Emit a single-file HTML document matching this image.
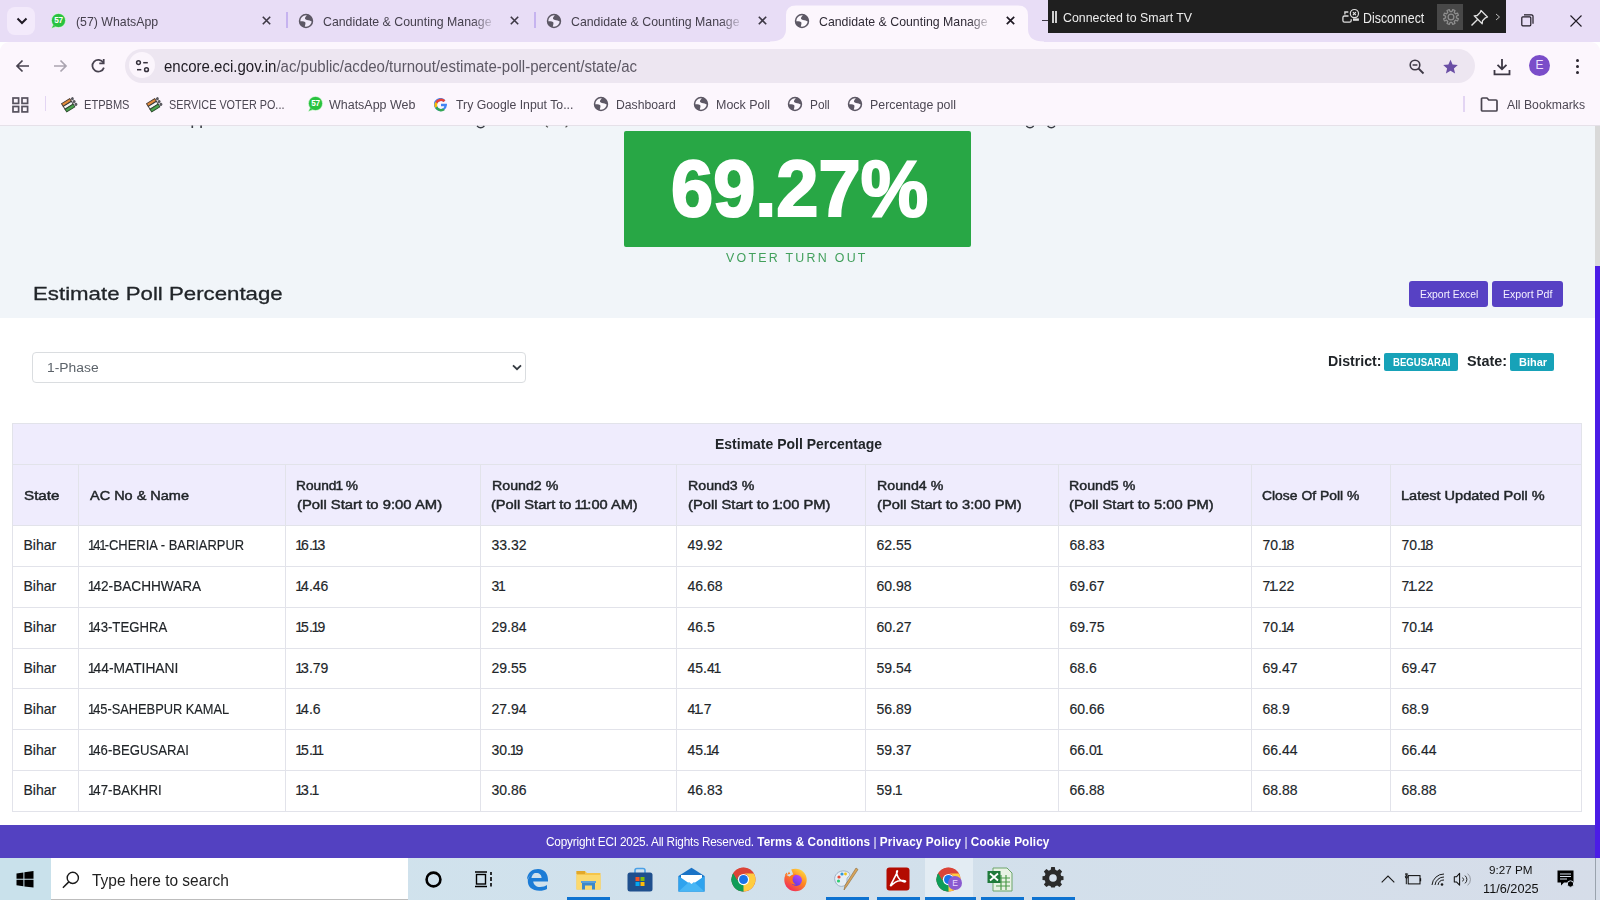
<!DOCTYPE html>
<html><head><meta charset="utf-8">
<style>
*{box-sizing:border-box;margin:0;padding:0}
html,body{width:1600px;height:900px;overflow:hidden;font-family:"Liberation Sans",sans-serif;background:#fff}
.abs{position:absolute}
.ft{position:absolute;white-space:nowrap;line-height:1}
.n1{margin:0 -2px 0 -1.2px}
.n1h{margin:0 -1.2px 0 -0.8px}
.hd{-webkit-text-stroke:0.45px #212529}
.dt{-webkit-text-stroke:0.15px #212529}
#tabs{position:absolute;left:0;top:0;width:1600px;height:42px;background:#e8ddf6}
#toolbar{position:absolute;left:0;top:41.5px;width:1600px;height:46.5px;background:#fcf6fd;border-radius:9px 9px 0 0}
#bm{position:absolute;left:0;top:88px;width:1600px;height:38px;background:#fcf6fd;border-bottom:1px solid #e6e1e9}
#sec1{position:absolute;left:0;top:126px;width:1595px;height:192px;background:#f1f5f9}
#green{position:absolute;left:624px;top:131px;width:347px;height:116px;background:#28a745;border-radius:2px}
.btn{position:absolute;top:281px;height:26px;background:#5741c4;border-radius:3px}
#sel{position:absolute;left:32px;top:352px;width:494px;height:31px;border:1px solid #dadde0;border-radius:4px;background:#fff}
.badge{position:absolute;top:353px;height:18px;background:#17a2b8;border-radius:2px}
#thead{position:absolute;left:12px;top:423px;width:1570px;height:102px;background:#efecfd}
.hl{position:absolute;height:1px;background:#e2e3ea}
.vl{position:absolute;width:1px;background:#e2e3ea}
#footer{position:absolute;left:0;top:825px;width:1595px;height:33px;background:#5341c1}
#sb{position:absolute;left:1595px;top:126px;width:5px;height:140px;background:#d9d9d9}
#thumb{position:absolute;left:1595px;top:266px;width:5px;height:592px;background:#4b1ce6}
#task{position:absolute;left:0;top:858px;width:1600px;height:42px;background:linear-gradient(90deg,#cfe3ed,#d1e1ec 45%,#d6dde9)}
</style></head><body>
<svg width="0" height="0" style="position:absolute">
  <defs>
    <g id="globe">
      <circle cx="11" cy="11" r="6.45" fill="#fff" fill-opacity="0.35" stroke="#5d5865" stroke-width="1.55"/>
      <path d="M12.2 4.5 C11.4 6.2 9.6 7.6 10 8.7 C10.6 10 13.2 9.8 14.6 10.6 C15.8 11.2 16.6 11.4 17.45 11.5 A6.45 6.45 0 0 0 12.2 4.5 Z" fill="#5d5865"/>
      <path d="M4.6 11.4 C6.6 11.3 8.8 11 10 11.9 C11 12.8 10.2 14.6 9.6 17.3 A6.45 6.45 0 0 1 4.6 11.4 Z" fill="#5d5865"/>
    </g>
    <g id="evm">
      <g transform="rotate(-32 8.5 8.5)">
        <rect x="2.2" y="3.6" width="9.6" height="3.1" fill="#e08a3a" stroke="#4a3a30" stroke-width="0.9"/>
        <rect x="2.2" y="6.9" width="9.6" height="3.1" fill="#f6f6f6" stroke="#3a3a3a" stroke-width="0.9"/>
        <rect x="2.2" y="10.2" width="9.6" height="3.1" fill="#4aa34e" stroke="#2d4a2d" stroke-width="0.9"/>
        <circle cx="14" cy="5.1" r="1.5" fill="#5a5a60"/><circle cx="14" cy="8.5" r="1.5" fill="#5a5a60"/><circle cx="14" cy="11.8" r="1.5" fill="#5a5a60"/>
      </g>
    </g>
    <g id="chromei">
      <circle cx="12" cy="12" r="11.5" fill="#db4437"/>
      <path d="M12 12 L2.04 6.25 A11.5 11.5 0 0 0 12 23.5 Z" fill="#0f9d58"/>
      <path d="M12 12 L2.04 6.25 L12 23.5 L17.75 13.5 Z" fill="#0f9d58"/>
      <path d="M12 12 L21.96 6.25 A11.5 11.5 0 0 1 12 23.5 Z" fill="#ffcd40"/>
      <path d="M12 12 L21.96 6.25 L12 23.5 L6.25 13.5 Z" fill="#ffcd40" opacity="0"/>
      <path d="M12 6.5 H21.96 A11.5 11.5 0 0 0 2.04 6.25 L6.2 13.5 A6 6 0 0 1 12 6.5Z" fill="#db4437"/>
      <path d="M2.04 6.25 L7 14.8 L12 23.5 A11.5 11.5 0 0 1 2.04 6.25Z" fill="#0f9d58"/>
      <path d="M12 23.5 L17.2 14.8 L21.96 6.25 H12 A6 6 0 0 1 17.2 14.8 Z" fill="#ffcd40"/>
      <circle cx="12" cy="12" r="5.4" fill="#fff"/>
      <circle cx="12" cy="12" r="4.3" fill="#1a73e8"/>
    </g>
  </defs>
</svg>

<!-- TAB STRIP -->
<div id="tabs">
  <div class="abs" style="left:7px;top:7px;width:28px;height:28px;border-radius:8px;background:#f3eafb"></div>
  <svg class="abs" style="left:16px;top:16px" width="12" height="10" viewBox="0 0 12 10"><path d="M1.5 2.5 L6 7 L10.5 2.5" fill="none" stroke="#1f1a24" stroke-width="2"/></svg>
  <!-- whatsapp icon -->
  <svg class="abs" style="left:49px;top:12px" width="18" height="18" viewBox="0 0 18 18"><path d="M4.2 12.6 L2.3 16.4 L6.8 14.9 Z" fill="#29c23f" stroke="#eafbe9" stroke-width="0.7"/><circle cx="9.5" cy="8.5" r="7.1" fill="#29c23f" stroke="#eafbe9" stroke-width="0.7"/><path d="M4.6 12.9 L3.3 15.5 L6.6 14.3 Z" fill="#29c23f"/><text x="9.6" y="11.4" font-size="8.2" font-weight="bold" fill="#fff" text-anchor="middle" font-family="Liberation Sans" letter-spacing="-0.3">57</text></svg>
  <svg class="abs x8" style="left:262px;top:16px" width="9" height="9" viewBox="0 0 9 9"><path d="M0.8 0.8 L8.2 8.2 M8.2 0.8 L0.8 8.2" stroke="#3d3845" stroke-width="1.6"/></svg>
  <div class="abs" style="left:286px;top:12px;width:1.5px;height:16px;background:#c6b3ef"></div>
  <svg class="abs" style="left:294.76px;top:9.50px" width="22" height="22" viewBox="0 0 22 22"><use href="#globe"/></svg>
  <svg class="abs" style="left:510px;top:16px" width="9" height="9" viewBox="0 0 9 9"><path d="M0.8 0.8 L8.2 8.2 M8.2 0.8 L0.8 8.2" stroke="#3d3845" stroke-width="1.6"/></svg>
  <div class="abs" style="left:534px;top:12px;width:1.5px;height:16px;background:#c6b3ef"></div>
  <svg class="abs" style="left:542.60px;top:9.50px" width="22" height="22" viewBox="0 0 22 22"><use href="#globe"/></svg>
  <svg class="abs" style="left:758px;top:16px" width="9" height="9" viewBox="0 0 9 9"><path d="M0.8 0.8 L8.2 8.2 M8.2 0.8 L0.8 8.2" stroke="#3d3845" stroke-width="1.6"/></svg>
  <!-- active tab -->
  <svg class="abs" style="left:770px;top:5px" width="274" height="40" viewBox="0 0 274 40"><path d="M0 36.5 Q16 36.5 16 24 L16 10 Q16 0.5 26 0.5 L248 0.5 Q258 0.5 258 10 L258 24 Q258 36.5 274 36.5 V40 H0 Z" fill="#fcf6fd"/></svg>
  <svg class="abs" style="left:790.70px;top:9.50px" width="22" height="22" viewBox="0 0 22 22"><use href="#globe"/></svg>
  <svg class="abs" style="left:1006px;top:16px" width="9" height="9" viewBox="0 0 9 9"><path d="M0.8 0.8 L8.2 8.2 M8.2 0.8 L0.8 8.2" stroke="#1f1a24" stroke-width="1.7"/></svg>
  <div class="abs" style="left:1042px;top:19.5px;width:7px;height:1.6px;background:#3d3845"></div>
  <!-- cast bar -->
  <div class="abs" style="left:1048px;top:0;width:458px;height:33px;background:#1f1f1f"></div>
  <div class="abs" style="left:1052px;top:11px;width:1.6px;height:12px;background:#cfcfcf"></div>
  <div class="abs" style="left:1055px;top:11px;width:1.6px;height:12px;background:#cfcfcf"></div>
  <svg class="abs" style="left:1336px;top:4px" width="26" height="22" viewBox="0 0 26 22"><path d="M12.5 12 H8.5 Q6.9 12 6.9 13.6 V16.6 Q6.9 18.2 8.5 18.2 H13.6 Q15.2 18.2 15.2 16.6 V15.2" fill="none" stroke="#dedede" stroke-width="1.3"/><path d="M8.9 10.4 V8 H12.3" fill="none" stroke="#dedede" stroke-width="1.3"/><circle cx="18.4" cy="9.6" r="4.1" fill="none" stroke="#dedede" stroke-width="1.2"/><path d="M16.9 8.1 L19.9 11.1 M19.9 8.1 L16.9 11.1" stroke="#e8e8e8" stroke-width="1.1"/><rect x="17" y="14.4" width="5.9" height="2.4" fill="#dedede"/></svg>
  <div class="abs" style="left:1437px;top:4px;width:26px;height:25.5px;background:#484848"></div>
  <svg class="abs" style="left:1439.7px;top:6.3px" width="22" height="22" viewBox="0 0 22 22"><path d="M16.42 11.91 L18.39 12.77 L17.48 14.97 L15.48 14.19 L14.19 15.48 L14.97 17.48 L12.77 18.39 L11.91 16.42 L10.09 16.42 L9.23 18.39 L7.03 17.48 L7.81 15.48 L6.52 14.19 L4.52 14.97 L3.61 12.77 L5.58 11.91 L5.58 10.09 L3.61 9.23 L4.52 7.03 L6.52 7.81 L7.81 6.52 L7.03 4.52 L9.23 3.61 L10.09 5.58 L11.91 5.58 L12.77 3.61 L14.97 4.52 L14.19 6.52 L15.48 7.81 L17.48 7.03 L18.39 9.23 L16.42 10.09 Z" fill="none" stroke="#8e8e8e" stroke-width="1.25" stroke-linejoin="round"/><circle cx="11" cy="11" r="2.9" fill="none" stroke="#8e8e8e" stroke-width="1.25"/></svg>
  <svg class="abs" style="left:1470px;top:9px" width="19" height="18" viewBox="0 0 19 18"><path d="M11 1.5 L17.5 8 L15.5 8.8 L12.5 11.8 L12.2 14.8 L4.2 6.8 L7.2 6.5 L10.2 3.5 Z" fill="none" stroke="#e0e0e0" stroke-width="1.3" stroke-linejoin="round"/><path d="M7.8 10.2 L1.5 16.5" stroke="#e0e0e0" stroke-width="1.4"/></svg>
  <svg class="abs" style="left:1495px;top:13px" width="6" height="8" viewBox="0 0 6 8"><path d="M1 1 L4.5 4 L1 7" fill="none" stroke="#bdbdbd" stroke-width="1"/></svg>
  <!-- window controls -->
  <svg class="abs" style="left:1521px;top:14px" width="13" height="13" viewBox="0 0 13 13"><rect x="0.8" y="2.8" width="9" height="9" rx="1" fill="none" stroke="#1f1a24" stroke-width="1.2"/><path d="M3 0.8 H10.5 A1.5 1.5 0 0 1 12 2.3 V9.8" fill="none" stroke="#1f1a24" stroke-width="1.2"/></svg>
  <svg class="abs" style="left:1570px;top:15px" width="12" height="12" viewBox="0 0 12 12"><path d="M0.5 0.5 L11.5 11.5 M11.5 0.5 L0.5 11.5" stroke="#1f1a24" stroke-width="1.1"/></svg>
</div>

<!-- TOOLBAR -->
<div id="toolbar">
  <svg class="abs" style="left:15px;top:17px" width="15" height="14" viewBox="0 0 15 14"><path d="M14 7 H2.5 M7.5 1.5 L2 7 L7.5 12.5" fill="none" stroke="#47424f" stroke-width="1.7"/></svg>
  <svg class="abs" style="left:53px;top:17px" width="15" height="14" viewBox="0 0 15 14"><path d="M1 7 H12.5 M7.5 1.5 L13 7 L7.5 12.5" fill="none" stroke="#aaa4b0" stroke-width="1.7"/></svg>
  <svg class="abs" style="left:88px;top:14px" width="20" height="20" viewBox="0 0 20 20"><path d="M15.3 6.6 A5.9 5.9 0 1 0 15.9 11.6" fill="none" stroke="#47424f" stroke-width="1.75"/><path d="M11.3 7.4 H15.7 V3" fill="none" stroke="#47424f" stroke-width="1.75"/></svg>
  <div class="abs" style="left:125px;top:7.5px;width:1350px;height:34px;border-radius:17px;background:#ede6f1"></div>
  <div class="abs" style="left:128.5px;top:10.5px;width:26px;height:26px;border-radius:13px;background:#fbf5fc"></div>
  <svg class="abs" style="left:134px;top:17px" width="16" height="14" viewBox="0 0 16 14"><circle cx="4.5" cy="3.7" r="1.9" fill="none" stroke="#35303b" stroke-width="1.5"/><path d="M9.2 3.7 H13.8" stroke="#35303b" stroke-width="1.5"/><circle cx="12.5" cy="10.7" r="1.9" fill="none" stroke="#35303b" stroke-width="1.5"/><path d="M3 10.7 H7.3" stroke="#35303b" stroke-width="1.5"/></svg>
  <svg class="abs" style="left:1409px;top:17px" width="16" height="16" viewBox="0 0 16 16"><circle cx="6" cy="6" r="4.8" fill="none" stroke="#3d3845" stroke-width="1.6"/><path d="M3.6 6 H8.4" stroke="#3d3845" stroke-width="1.5"/><path d="M9.5 9.5 L14.5 14.5" stroke="#3d3845" stroke-width="1.8"/></svg>
  <svg class="abs" style="left:1442px;top:17px" width="17" height="16" viewBox="0 0 17 16"><path d="M8.5 0.8 L10.6 5.6 L15.8 6 L11.9 9.4 L13.1 14.6 L8.5 11.8 L3.9 14.6 L5.1 9.4 L1.2 6 L6.4 5.6 Z" fill="#6a4ea5"/></svg>
  <svg class="abs" style="left:1493px;top:16px" width="18" height="18" viewBox="0 0 18 18"><path d="M9 1 V11 M4.5 6.8 L9 11.2 L13.5 6.8" fill="none" stroke="#3d3845" stroke-width="1.8"/><path d="M1.5 12 V16.3 H16.5 V12" fill="none" stroke="#3d3845" stroke-width="1.8"/></svg>
  <div class="abs" style="left:1529px;top:13.5px;width:21px;height:21px;border-radius:50%;background:#7a4dc9;color:#eee0ff;font-size:12px;text-align:center;line-height:21px">E</div>
  <div class="abs" style="left:1575.5px;top:17.5px;width:3px;height:3px;border-radius:50%;background:#2b2630"></div>
  <div class="abs" style="left:1575.5px;top:23.5px;width:3px;height:3px;border-radius:50%;background:#2b2630"></div>
  <div class="abs" style="left:1575.5px;top:29.5px;width:3px;height:3px;border-radius:50%;background:#2b2630"></div>
</div>

<!-- BOOKMARKS -->
<div id="bm">
  <svg class="abs" style="left:12px;top:9px" width="17" height="16" viewBox="0 0 17 16"><rect x="1" y="1" width="5.6" height="5.4" fill="none" stroke="#56515d" stroke-width="1.7"/><rect x="10" y="1" width="5.6" height="5.4" fill="none" stroke="#56515d" stroke-width="1.7"/><rect x="1" y="9.5" width="5.6" height="5.4" fill="none" stroke="#56515d" stroke-width="1.7"/><rect x="10" y="9.5" width="5.6" height="5.4" fill="none" stroke="#56515d" stroke-width="1.7"/></svg>
  <div class="abs" style="left:44.5px;top:8px;width:1.5px;height:15px;background:#e3d5f3"></div>
  <svg class="abs evm" style="left:61px;top:8px" width="17" height="17" viewBox="0 0 17 17"><use href="#evm"/></svg>
  <svg class="abs" style="left:146px;top:8px" width="17" height="17" viewBox="0 0 17 17"><use href="#evm"/></svg>
  <svg class="abs" style="left:305.5px;top:7px" width="18" height="18" viewBox="0 0 18 18"><path d="M4.2 12.6 L2.3 16.4 L6.8 14.9 Z" fill="#29c23f" stroke="#eafbe9" stroke-width="0.7"/><circle cx="9.5" cy="8.5" r="7.1" fill="#29c23f" stroke="#eafbe9" stroke-width="0.7"/><path d="M4.6 12.9 L3.3 15.5 L6.6 14.3 Z" fill="#29c23f"/><text x="9.6" y="11.4" font-size="8.2" font-weight="bold" fill="#fff" text-anchor="middle" font-family="Liberation Sans" letter-spacing="-0.3">57</text></svg>
  <svg class="abs" style="left:434px;top:10px" width="14" height="14" viewBox="0 0 14 14"><path d="M12.9 5.8 H7 V8.3 H10.3 C9.9 10 8.6 11 7 11 A4 4 0 1 1 9.6 4 L11.4 2.2 A6.6 6.6 0 1 0 13 7 Z" fill="#4285f4"/><path d="M1.2 4 L3.4 5.6 A4 4 0 0 1 9.6 4 L11.4 2.2 A6.6 6.6 0 0 0 1.2 4Z" fill="#ea4335"/><path d="M0.4 7 A6.6 6.6 0 0 0 1.2 10.1 L3.4 8.4 A4 4 0 0 1 3.4 5.6 L1.2 4 A6.6 6.6 0 0 0 0.4 7Z" fill="#fbbc05"/><path d="M1.2 10.1 A6.6 6.6 0 0 0 11 12.1 L8.9 10.5 A4 4 0 0 1 3.4 8.4Z" fill="#34a853"/></svg>
  <svg class="abs" style="left:589.50px;top:5.00px" width="22" height="22" viewBox="0 0 22 22"><use href="#globe"/></svg>
  <svg class="abs" style="left:689.50px;top:5.00px" width="22" height="22" viewBox="0 0 22 22"><use href="#globe"/></svg>
  <svg class="abs" style="left:783.50px;top:5.00px" width="22" height="22" viewBox="0 0 22 22"><use href="#globe"/></svg>
  <svg class="abs" style="left:844.00px;top:5.00px" width="22" height="22" viewBox="0 0 22 22"><use href="#globe"/></svg>
  <div class="abs" style="left:1463px;top:8px;width:1.5px;height:16px;background:#e3d5f3"></div>
  <svg class="abs" style="left:1480px;top:9px" width="19" height="15" viewBox="0 0 19 15"><path d="M1.5 2 A1 1 0 0 1 2.5 1 H7 L8.8 3 H16 A1 1 0 0 1 17 4 V13 A1 1 0 0 1 16 14 H2.5 A1 1 0 0 1 1.5 13 Z" fill="none" stroke="#4a4550" stroke-width="1.7" stroke-linejoin="round"/></svg>
</div>

<div id="sec1"></div>
<div id="green"></div>
<svg class="abs" style="left:0;top:120px" width="1100" height="12" viewBox="0 120 1100 12">
<path d="M192.3 125.5 V128 M201.1 125.5 V128" stroke="#3a3d45" stroke-width="1.6"/>
<path d="M477 126 Q480.7 129.6 484.4 126" fill="none" stroke="#3a3d45" stroke-width="1.3"/>
<path d="M1026.3 126 Q1030 129.6 1033.7 126 M1047.6 126 Q1051.3 129.6 1055 126" fill="none" stroke="#3a3d45" stroke-width="1.3"/>
<path d="M546 126 L548 127.3 M567.3 126 L565.5 127.3" stroke="#555" stroke-width="1.1"/>
</svg>
<div class="btn" style="left:1409px;width:79px"></div>
<div class="btn" style="left:1492px;width:70.5px"></div>
<div id="sel"></div>
<svg class="abs" style="left:512px;top:364px" width="10" height="7" viewBox="0 0 10 7"><path d="M1 1.3 L5 5.2 L9 1.3" fill="none" stroke="#343a40" stroke-width="1.8"/></svg>
<div class="badge" style="left:1384px;width:74px"></div>
<div class="badge" style="left:1510px;width:44px"></div>
<div id="thead"></div>
<div class="hl" style="left:12px;top:423px;width:1570px"></div>
<div class="hl" style="left:12px;top:464px;width:1570px"></div>
<div class="hl" style="left:12px;top:525px;width:1570px"></div>
<div class="hl" style="left:12px;top:566px;width:1570px"></div>
<div class="hl" style="left:12px;top:607px;width:1570px"></div>
<div class="hl" style="left:12px;top:648px;width:1570px"></div>
<div class="hl" style="left:12px;top:688px;width:1570px"></div>
<div class="hl" style="left:12px;top:729px;width:1570px"></div>
<div class="hl" style="left:12px;top:770px;width:1570px"></div>
<div class="hl" style="left:12px;top:811px;width:1570px"></div>
<div class="vl" style="left:12px;top:423px;height:389px"></div>
<div class="vl" style="left:78px;top:464px;height:348px"></div>
<div class="vl" style="left:285px;top:464px;height:348px"></div>
<div class="vl" style="left:480px;top:464px;height:348px"></div>
<div class="vl" style="left:676px;top:464px;height:348px"></div>
<div class="vl" style="left:865px;top:464px;height:348px"></div>
<div class="vl" style="left:1058px;top:464px;height:348px"></div>
<div class="vl" style="left:1251px;top:464px;height:348px"></div>
<div class="vl" style="left:1390px;top:464px;height:348px"></div>
<div class="vl" style="left:1581px;top:423px;height:389px"></div>
<div id="footer"></div>
<div id="sb"></div><div id="thumb"></div>
<!-- TASKBAR -->
<div id="task">
  <div class="abs" style="left:0;top:0;width:51px;height:42px;background:#c9e1eb"></div>
  <svg class="abs" style="left:16px;top:13px" width="18" height="17" viewBox="0 0 18 17"><path d="M0.5 2.4 L7.4 1.4 V7.8 H0.5 Z M8.4 1.2 L17.5 0 V7.8 H8.4 Z M0.5 8.8 H7.4 V15.2 L0.5 14.3 Z M8.4 8.8 H17.5 V16.6 L8.4 15.4 Z" fill="#000"/></svg>
  <div class="abs" style="left:51px;top:0;width:357px;height:42px;background:#fff;border-bottom:1px solid #bdbdbd"></div>
  <svg class="abs" style="left:62px;top:13px" width="18" height="18" viewBox="0 0 18 18"><circle cx="10.8" cy="6.9" r="5.6" fill="none" stroke="#1a1a1a" stroke-width="1.4"/><path d="M6.8 10.9 L0.9 16.8" stroke="#1a1a1a" stroke-width="1.5"/></svg>
  <svg class="abs" style="left:425px;top:13px" width="17" height="17" viewBox="0 0 17 17"><circle cx="8.5" cy="8.5" r="6.9" fill="none" stroke="#000" stroke-width="2.6"/></svg>
  <svg class="abs" style="left:474px;top:13px" width="20" height="17" viewBox="0 0 20 17"><path d="M1 1 H13 M1 15.5 H13" stroke="#000" stroke-width="1.3"/><rect x="2.5" y="3.5" width="9" height="9.5" fill="none" stroke="#000" stroke-width="1.4"/><path d="M17 1 V4 M17 6 V10 M17 12 V15.5" stroke="#000" stroke-width="1.6"/></svg>
  <!-- edge -->
  <svg class="abs" style="left:525px;top:10px" width="24" height="23" viewBox="0 0 24 23"><path d="M2 12 C2 4 8 1 13 1 C20 1 23 6 23 12 V13.5 H8.2 C8.6 17 11.5 19 15 19 C18 19 20.5 18 22 17 V21 C20 22.2 17.5 22.8 14.5 22.8 C7 22.8 2.5 18.5 2.8 12.5 C3.5 8 6.5 6 9 5.5 C7 7 6.5 9 6.5 10 H16.6 C16.6 7 14.5 5 11.5 5 C7.5 5 4 7.5 2 12 Z" fill="#1c7cd6"/></svg>
  <!-- explorer -->
  <svg class="abs" style="left:576px;top:11px" width="25" height="21" viewBox="0 0 25 21"><path d="M0.5 2 H9 L11 4 H24.5 V20.5 H0.5 Z" fill="#f5c54a"/><path d="M0.5 6 H24.5 V20.5 H0.5 Z" fill="#fbd96e"/><path d="M0.5 2 H9 V5 H0.5Z" fill="#e2a82a"/><path d="M6 20.5 V14 H19 V20.5 H16 V16.5 H9 V20.5 Z" fill="#3c87c9"/><path d="M5 12 H20 V14 H5Z" fill="#5aa0da"/></svg>
  <div class="abs" style="left:567px;top:38.5px;width:43px;height:3.5px;background:#0e73d1"></div>
  <!-- store -->
  <svg class="abs" style="left:627px;top:9px" width="26" height="25" viewBox="0 0 26 25"><path d="M8 6 V3.5 A2 2 0 0 1 10 1.5 H16 A2 2 0 0 1 18 3.5 V6" fill="none" stroke="#4aa0e6" stroke-width="1.6"/><rect x="0.5" y="5.5" width="25" height="19" rx="2.5" fill="#1f4f8d"/><rect x="8.5" y="10" width="4" height="4" fill="#f35325"/><rect x="13.5" y="10" width="4" height="4" fill="#81bc06"/><rect x="8.5" y="15" width="4" height="4" fill="#05a6f0"/><rect x="13.5" y="15" width="4" height="4" fill="#ffba08"/></svg>
  <!-- mail -->
  <svg class="abs" style="left:678px;top:9px" width="27" height="25" viewBox="0 0 27 25"><path d="M0.5 9 L13.5 0.8 L26.5 9 V24.5 H0.5 Z" fill="#1a73c6"/><path d="M3 8 H24 V16 L13.5 21 L3 16Z" fill="#ffffff"/><path d="M0.5 9 L13.5 18 L26.5 9 V24.5 H0.5 Z" fill="#2fa3ee"/><path d="M0.5 24.5 L11 15 L13.5 17 L16 15 L26.5 24.5Z" fill="#48b6f5"/></svg>
  <!-- chrome -->
  <svg class="abs" style="left:731px;top:867px;top:9px" width="25" height="25" viewBox="0 0 24 24"><use href="#chromei"/></svg>
  <!-- firefox -->
  <svg class="abs" style="left:782.5px;top:9px" width="25" height="25" viewBox="0 0 25 25"><defs><linearGradient id="ffg" x1="0.9" y1="0" x2="0.2" y2="1"><stop offset="0" stop-color="#ffe54a"/><stop offset="0.45" stop-color="#ff8a1f"/><stop offset="1" stop-color="#f0245f"/></linearGradient><linearGradient id="ffp" x1="0.8" y1="0" x2="0.2" y2="1"><stop offset="0" stop-color="#b845ff"/><stop offset="1" stop-color="#5b3ad8"/></linearGradient></defs><circle cx="12.5" cy="13" r="11.2" fill="url(#ffg)"/><path d="M12.5 13 L0.8 6.5 A13 13 0 0 1 7.5 0.5 Z" fill="#d0e3ed"/><path d="M1.8 8.2 L3.5 5.5 L4.6 7.2 L6 4.5 L7.2 6.8 L9.5 6.2 Z" fill="#ff7a1f"/><circle cx="13.3" cy="13.3" r="5.6" fill="url(#ffp)"/><path d="M6.6 9.4 Q9.6 6.6 13.6 7.3 Q9.8 8.8 9.6 12.2 Q9.4 15.6 13 17.6 Q8.4 17.8 7 14.2 Z" fill="#ff7420"/></svg>
  <!-- paint -->
  <svg class="abs" style="left:833px;top:9px" width="26" height="25" viewBox="0 0 26 25"><path d="M2 14 C0 8 6 3 12 4 C17 5 18 8 15 10 C13 11.5 15 14 13 17 C10 21 4 20 2 14Z" fill="#e6eef6" stroke="#9fb3c8" stroke-width="1"/><circle cx="6" cy="10" r="1.6" fill="#e74c3c"/><circle cx="9" cy="7" r="1.6" fill="#3498db"/><circle cx="5.5" cy="14" r="1.6" fill="#2ecc71"/><circle cx="12.5" cy="7" r="1.4" fill="#f1c40f"/><path d="M23 1 L25 2.5 L14 19 L11 23 L12 18.5 Z" fill="#d9a55b" stroke="#8a6a3a" stroke-width="0.6"/></svg>
  <div class="abs" style="left:826px;top:38.5px;width:43px;height:3.5px;background:#0e73d1"></div>
  <!-- acrobat -->
  <svg class="abs" style="left:886px;top:9px" width="24" height="24" viewBox="0 0 24 24"><rect x="0.5" y="0.5" width="23" height="23" rx="3" fill="#b30b00"/><path d="M4.5 18.5 C6 15 12 5 11.5 4 C10.5 3 10 6 12 10 C14 14 18 15.5 19.5 14.5 C20 13.5 16 13 12 14 C8 15 5 19.5 4.5 18.5Z" fill="none" stroke="#fff" stroke-width="1.6"/></svg>
  <div class="abs" style="left:877px;top:38.5px;width:43px;height:3.5px;background:#0e73d1"></div>
  <!-- chrome active -->
  <div class="abs" style="left:925px;top:0;width:48px;height:42px;background:#e3ecf3"></div>
  <svg class="abs" style="left:936px;top:9px" width="25" height="25" viewBox="0 0 24 24"><use href="#chromei"/></svg>
  <div class="abs" style="left:948px;top:876px;top:18px;width:14px;height:14px;border-radius:50%;background:#8a5ad0;color:#eadcff;font-size:8.5px;text-align:center;line-height:14px">E</div>
  <div class="abs" style="left:925px;top:38.5px;width:51px;height:3.5px;background:#0e73d1"></div>
  <!-- excel -->
  <svg class="abs" style="left:987px;top:9px" width="26" height="25" viewBox="0 0 26 25"><path d="M6 1 H20 L25 6 V24 H6Z" fill="#e8f2e4" stroke="#6ca56a" stroke-width="1"/><path d="M9 11 H23 M9 15 H23 M9 19 H23 M14 8 V23 M19 8 V23" stroke="#4c9a4a" stroke-width="1.2"/><rect x="0.5" y="4" width="13" height="12" fill="#1f7a3a"/><path d="M3 6.5 L11 13.5 M11 6.5 L3 13.5" stroke="#fff" stroke-width="1.8"/></svg>
  <div class="abs" style="left:981px;top:38.5px;width:43px;height:3.5px;background:#0e73d1"></div>
  <!-- settings -->
  <svg class="abs" style="left:1042px;top:8px" width="22" height="22" viewBox="0 0 22 22"><path d="M9.2 1 H12.8 L13.3 3.8 L15.2 4.7 L17.6 3.1 L20.1 5.6 L18.5 8 L19.3 9.9 L21.5 10.3 V13.9 L19.3 14.3 L18.5 16.2 L20 18.6 L17.5 21 L15.2 19.5 L13.3 20.3 L12.8 21.5 H9.2 L8.7 20.3 L6.8 19.5 L4.4 21 L1.9 18.5 L3.5 16.2 L2.7 14.3 L0.5 13.9 V10.3 L2.7 9.9 L3.5 8 L1.9 5.6 L4.4 3.1 L6.8 4.7 L8.7 3.8 Z" fill="#2b2b2b"/><circle cx="11" cy="12" r="3.8" fill="#d6e1ec"/></svg>
  <div class="abs" style="left:1032px;top:38.5px;width:43px;height:3.5px;background:#0e73d1"></div>
  <!-- tray -->
  <svg class="abs" style="left:1381px;top:17px" width="14" height="8" viewBox="0 0 14 8"><path d="M0.7 7.3 L7 1 L13.3 7.3" fill="none" stroke="#1a1a1a" stroke-width="1.1"/></svg>
  <svg class="abs" style="left:1403px;top:15px" width="20" height="13" viewBox="0 0 20 13"><rect x="5.2" y="2.6" width="11.8" height="8.3" fill="none" stroke="#111" stroke-width="1.05"/><path d="M17.5 5.2 V8.3" stroke="#111" stroke-width="1.3"/><path d="M3.3 0.2 V11.2" stroke="#111" stroke-width="1"/><circle cx="3.6" cy="3.9" r="1.3" fill="none" stroke="#111" stroke-width="0.9"/><path d="M2.6 0.3 V2 M4.6 0.3 V2" stroke="#111" stroke-width="0.7"/></svg>
  <svg class="abs" style="left:1431px;top:15px" width="15" height="14" viewBox="0 0 15 14"><path d="M1 12 A12 12 0 0 1 13 1" fill="none" stroke="#1a1a1a" stroke-width="1"/><path d="M4 12 A9 9 0 0 1 13 4" fill="none" stroke="#1a1a1a" stroke-width="1"/><path d="M7 12 A6 6 0 0 1 13 7" fill="none" stroke="#1a1a1a" stroke-width="1"/><circle cx="11" cy="11.5" r="1.3" fill="#1a1a1a"/></svg>
  <svg class="abs" style="left:1453px;top:14px" width="19" height="15" viewBox="0 0 19 15"><path d="M1.3 4.8 H3.4 L6.6 1.4 V13.2 L3.4 9.9 H1.3 Z" fill="none" stroke="#111" stroke-width="1.05" stroke-linejoin="round"/><path d="M9.6 5.6 A2.6 2.6 0 0 1 9.6 9.4" fill="none" stroke="#222" stroke-width="1"/><path d="M12 3.6 A5 5 0 0 1 12 11.4" fill="none" stroke="#222" stroke-width="1"/><path d="M14.6 1.6 A7.6 7.6 0 0 1 14.6 13.4" fill="none" stroke="#8a8f96" stroke-width="0.9"/></svg>
  <svg class="abs" style="left:1557px;top:12px" width="18" height="18" viewBox="0 0 18 18"><path d="M0.5 0.5 H16.5 V12.5 H7 L4 15.5 V12.5 H0.5 Z" fill="#000"/><path d="M3 4 H14 M3 6.5 H14 M3 9 H10" stroke="#d6dfeb" stroke-width="1"/><circle cx="13.5" cy="14" r="3.2" fill="#000" stroke="#d6dfeb" stroke-width="1"/></svg>
  <div class="abs" style="left:1595px;top:0;width:1px;height:42px;background:#9aa3ad"></div>
</div>

<div id="wa" class="ft" style="left:75.80px;top:16.27px;font-size:12.79px;color:#45404d;font-weight:normal;transform:scaleX(0.9642);transform-origin:0 0;">(57) WhatsApp</div>
<div id="ct0" class="ft" style="left:323.20px;top:16.27px;font-size:12.79px;color:#45404d;font-weight:normal;width:180px;overflow:hidden;-webkit-mask-image:linear-gradient(90deg,#000 155px,transparent 180px);transform:scaleX(0.9642);transform-origin:0 0;">Candidate &amp; Counting Manage</div>
<div id="ct1" class="ft" style="left:570.50px;top:16.27px;font-size:12.79px;color:#45404d;font-weight:normal;width:180px;overflow:hidden;-webkit-mask-image:linear-gradient(90deg,#000 155px,transparent 180px);transform:scaleX(0.9642);transform-origin:0 0;">Candidate &amp; Counting Manage</div>
<div id="ct2" class="ft" style="left:819.00px;top:16.27px;font-size:12.79px;color:#2f2a35;font-weight:normal;width:180px;overflow:hidden;-webkit-mask-image:linear-gradient(90deg,#000 155px,transparent 180px);transform:scaleX(0.9642);transform-origin:0 0;">Candidate &amp; Counting Manage</div>
<div id="cast" class="ft" style="left:1062.50px;top:11.13px;font-size:13.66px;color:#ededed;font-weight:normal;transform:scaleX(0.9063);transform-origin:0 0;">Connected to Smart TV</div>
<div id="disc" class="ft" style="left:1363.40px;top:11.79px;font-size:13.95px;color:#ededed;font-weight:normal;transform:scaleX(0.8890);transform-origin:0 0;">Disconnect</div>
<div id="url" class="ft" style="left:164.00px;top:58.95px;font-size:16.00px;color:#5d5864;font-weight:normal;transform:scaleX(0.9385);transform-origin:0 0;"><span style="color:#1e1b22">encore.eci.gov.in</span>/ac/public/acdeo/turnout/estimate-poll-percent/state/ac</div>
<div id="b1" class="ft" style="left:83.50px;top:97.73px;font-size:13.66px;color:#4c4753;font-weight:normal;transform:scaleX(0.8102);transform-origin:0 0;">ETPBMS</div>
<div id="b2" class="ft" style="left:168.90px;top:97.73px;font-size:13.66px;color:#4c4753;font-weight:normal;transform:scaleX(0.7934);transform-origin:0 0;">SERVICE VOTER PO...</div>
<div id="b3" class="ft" style="left:329.40px;top:97.73px;font-size:13.66px;color:#4c4753;font-weight:normal;transform:scaleX(0.9129);transform-origin:0 0;">WhatsApp Web</div>
<div id="b4" class="ft" style="left:456.00px;top:97.73px;font-size:13.66px;color:#4c4753;font-weight:normal;transform:scaleX(0.8992);transform-origin:0 0;">Try Google Input To...</div>
<div id="b5" class="ft" style="left:616.25px;top:97.73px;font-size:13.66px;color:#4c4753;font-weight:normal;transform:scaleX(0.8943);transform-origin:0 0;">Dashboard</div>
<div id="b6" class="ft" style="left:716.25px;top:97.73px;font-size:13.66px;color:#4c4753;font-weight:normal;transform:scaleX(0.9121);transform-origin:0 0;">Mock Poll</div>
<div id="b7" class="ft" style="left:810.00px;top:97.73px;font-size:13.66px;color:#4c4753;font-weight:normal;transform:scaleX(0.8669);transform-origin:0 0;">Poll</div>
<div id="b8" class="ft" style="left:870.00px;top:97.73px;font-size:13.66px;color:#4c4753;font-weight:normal;transform:scaleX(0.9062);transform-origin:0 0;">Percentage poll</div>
<div id="b9" class="ft" style="left:1507.00px;top:97.73px;font-size:13.66px;color:#4c4753;font-weight:normal;transform:scaleX(0.8937);transform-origin:0 0;">All Bookmarks</div>
<div id="pct" class="ft" style="left:670.70px;top:149.13px;font-size:79.00px;color:#ffffff;font-weight:bold;-webkit-text-stroke:2.2px #fff;transform:scaleX(0.9592);transform-origin:0 0;">69.27%</div>
<div id="vto" class="ft" style="left:726.00px;top:250.83px;font-size:13.66px;color:#42a05c;font-weight:normal;letter-spacing:2.5px;transform:scaleX(0.9075);transform-origin:0 0;">VOTER TURN OUT</div>
<div id="ttl" class="ft" style="left:33.10px;top:284.08px;font-size:19.04px;color:#212529;font-weight:normal;-webkit-text-stroke:0.3px #212529;transform:scaleX(1.1685);transform-origin:0 0;">Estimate Poll Percentage</div>
<div id="ex1" class="ft" style="left:1420.20px;top:289.54px;font-size:10.47px;color:#f4f0ff;font-weight:normal;transform:scaleX(0.9904);transform-origin:0 0;">Export Excel</div>
<div id="ex2" class="ft" style="left:1503.00px;top:289.54px;font-size:10.47px;color:#f4f0ff;font-weight:normal;transform:scaleX(1.0104);transform-origin:0 0;">Export Pdf</div>
<div id="ph" class="ft" style="left:47.40px;top:360.73px;font-size:13.66px;color:#5c636a;font-weight:normal;transform:scaleX(1.0143);transform-origin:0 0;">1-Phase</div>
<div id="dist" class="ft" style="left:1327.80px;top:354.81px;font-size:13.81px;color:#212529;font-weight:bold;transform:scaleX(1.0261);transform-origin:0 0;">District:</div>
<div id="bg1" class="ft" style="left:1393.20px;top:358.01px;font-size:10.03px;color:#ffffff;font-weight:bold;transform:scaleX(0.9566);transform-origin:0 0;">BEGUSARAI</div>
<div id="st" class="ft" style="left:1466.90px;top:354.81px;font-size:13.81px;color:#212529;font-weight:bold;transform:scaleX(1.0432);transform-origin:0 0;">State:</div>
<div id="bg2" class="ft" style="left:1518.60px;top:358.01px;font-size:10.03px;color:#ffffff;font-weight:bold;transform:scaleX(1.0933);transform-origin:0 0;">Bihar</div>
<div id="capt" class="ft" style="left:714.50px;top:437.61px;font-size:13.81px;color:#212529;font-weight:bold;transform:scaleX(1.0129);transform-origin:0 0;">Estimate Poll Percentage</div>
<div id="foot" class="ft" style="left:546.20px;top:836.27px;font-size:12.79px;color:#ffffff;font-weight:normal;transform:scaleX(0.9212);transform-origin:0 0;"><span style="letter-spacing:-0.2px">Copyright ECI 2025. All Rights Reserved.</span> <b style="letter-spacing:0.12px">Terms &amp; Conditions</b> | <b style="letter-spacing:0.12px">Privacy Policy</b> | <b style="letter-spacing:0.12px">Cookie Policy</b></div>
<div id="srch" class="ft" style="left:91.70px;top:871.96px;font-size:16.35px;color:#222222;font-weight:normal;transform:scaleX(0.9470);transform-origin:0 0;">Type here to search</div>
<div id="time" class="ft" style="left:1488.50px;top:864.78px;font-size:11.48px;color:#111111;font-weight:normal;transform:scaleX(1.0183);transform-origin:0 0;">9:27 PM</div>
<div id="date" class="ft" style="left:1482.80px;top:882.36px;font-size:13.52px;color:#111111;font-weight:normal;transform:scaleX(0.9404);transform-origin:0 0;">11/6/2025</div>
<div id="h0" class="ft" style="left:23.65px;top:488.60px;font-size:13.00px;color:#212529;font-weight:normal;-webkit-text-stroke:0.45px #212529;transform:scaleX(1.1677);transform-origin:0 0;">State</div>
<div id="h1" class="ft" style="left:89.60px;top:488.60px;font-size:13.00px;color:#212529;font-weight:normal;-webkit-text-stroke:0.45px #212529;transform:scaleX(1.1139);transform-origin:0 0;">AC No &amp; Name</div>
<div id="h2a" class="ft" style="left:296.25px;top:479.00px;font-size:13.00px;color:#212529;font-weight:normal;-webkit-text-stroke:0.45px #212529;transform:scaleX(1.0556);transform-origin:0 0;">Round<span class="n1h">1</span> %</div>
<div id="h2b" class="ft" style="left:296.50px;top:497.70px;font-size:13.00px;color:#212529;font-weight:normal;-webkit-text-stroke:0.45px #212529;transform:scaleX(1.1410);transform-origin:0 0;">(Poll Start to 9:00 AM)</div>
<div id="h3a" class="ft" style="left:491.50px;top:479.00px;font-size:13.00px;color:#212529;font-weight:normal;-webkit-text-stroke:0.45px #212529;transform:scaleX(1.0919);transform-origin:0 0;">Round2 %</div>
<div id="h3b" class="ft" style="left:491.00px;top:497.70px;font-size:13.00px;color:#212529;font-weight:normal;-webkit-text-stroke:0.45px #212529;transform:scaleX(1.1247);transform-origin:0 0;">(Poll Start to <span class="n1h">1</span><span class="n1h">1</span>:00 AM)</div>
<div id="h4a" class="ft" style="left:687.50px;top:479.00px;font-size:13.00px;color:#212529;font-weight:normal;-webkit-text-stroke:0.45px #212529;transform:scaleX(1.0919);transform-origin:0 0;">Round3 %</div>
<div id="h4b" class="ft" style="left:687.50px;top:497.70px;font-size:13.00px;color:#212529;font-weight:normal;-webkit-text-stroke:0.45px #212529;transform:scaleX(1.1314);transform-origin:0 0;">(Poll Start to <span class="n1h">1</span>:00 PM)</div>
<div id="h5a" class="ft" style="left:876.50px;top:479.00px;font-size:13.00px;color:#212529;font-weight:normal;-webkit-text-stroke:0.45px #212529;transform:scaleX(1.0919);transform-origin:0 0;">Round4 %</div>
<div id="h5b" class="ft" style="left:876.50px;top:497.70px;font-size:13.00px;color:#212529;font-weight:normal;-webkit-text-stroke:0.45px #212529;transform:scaleX(1.1314);transform-origin:0 0;">(Poll Start to 3:00 PM)</div>
<div id="h6a" class="ft" style="left:1068.90px;top:479.00px;font-size:13.00px;color:#212529;font-weight:normal;-webkit-text-stroke:0.45px #212529;transform:scaleX(1.0919);transform-origin:0 0;">Round5 %</div>
<div id="h6b" class="ft" style="left:1068.90px;top:497.70px;font-size:13.00px;color:#212529;font-weight:normal;-webkit-text-stroke:0.45px #212529;transform:scaleX(1.1314);transform-origin:0 0;">(Poll Start to 5:00 PM)</div>
<div id="h7" class="ft" style="left:1262.40px;top:488.60px;font-size:13.00px;color:#212529;font-weight:normal;-webkit-text-stroke:0.45px #212529;transform:scaleX(1.0687);transform-origin:0 0;">Close Of Poll %</div>
<div id="h8" class="ft" style="left:1400.60px;top:488.60px;font-size:13.00px;color:#212529;font-weight:normal;-webkit-text-stroke:0.45px #212529;transform:scaleX(1.1171);transform-origin:0 0;">Latest Updated Poll %</div>
<div id="d0_0" class="ft" style="left:23.50px;top:538.25px;font-size:14.00px;color:#212529;font-weight:normal;-webkit-text-stroke:0.15px #212529;">Bihar</div>
<div id="d0_1" class="ft" style="left:89.00px;top:538.25px;font-size:14.00px;color:#212529;font-weight:normal;-webkit-text-stroke:0.15px #212529;transform:scaleX(0.9236);transform-origin:0 0;"><span class="n1">1</span>4<span class="n1">1</span>-CHERIA - BARIARPUR</div>
<div id="d0_2" class="ft" style="left:296.50px;top:538.25px;font-size:14.00px;color:#212529;font-weight:normal;-webkit-text-stroke:0.15px #212529;"><span class="n1">1</span>6.<span class="n1">1</span>3</div>
<div id="d0_3" class="ft" style="left:491.50px;top:538.25px;font-size:14.00px;color:#212529;font-weight:normal;-webkit-text-stroke:0.15px #212529;">33.32</div>
<div id="d0_4" class="ft" style="left:687.50px;top:538.25px;font-size:14.00px;color:#212529;font-weight:normal;-webkit-text-stroke:0.15px #212529;">49.92</div>
<div id="d0_5" class="ft" style="left:876.50px;top:538.25px;font-size:14.00px;color:#212529;font-weight:normal;-webkit-text-stroke:0.15px #212529;">62.55</div>
<div id="d0_6" class="ft" style="left:1069.50px;top:538.25px;font-size:14.00px;color:#212529;font-weight:normal;-webkit-text-stroke:0.15px #212529;">68.83</div>
<div id="d0_7" class="ft" style="left:1262.50px;top:538.25px;font-size:14.00px;color:#212529;font-weight:normal;-webkit-text-stroke:0.15px #212529;">70.<span class="n1">1</span>8</div>
<div id="d0_8" class="ft" style="left:1401.50px;top:538.25px;font-size:14.00px;color:#212529;font-weight:normal;-webkit-text-stroke:0.15px #212529;">70.<span class="n1">1</span>8</div>
<div id="d1_0" class="ft" style="left:23.50px;top:579.11px;font-size:14.00px;color:#212529;font-weight:normal;-webkit-text-stroke:0.15px #212529;">Bihar</div>
<div id="d1_1" class="ft" style="left:89.00px;top:579.11px;font-size:14.00px;color:#212529;font-weight:normal;-webkit-text-stroke:0.15px #212529;transform:scaleX(0.9723);transform-origin:0 0;"><span class="n1">1</span>42-BACHHWARA</div>
<div id="d1_2" class="ft" style="left:296.50px;top:579.11px;font-size:14.00px;color:#212529;font-weight:normal;-webkit-text-stroke:0.15px #212529;"><span class="n1">1</span>4.46</div>
<div id="d1_3" class="ft" style="left:491.50px;top:579.11px;font-size:14.00px;color:#212529;font-weight:normal;-webkit-text-stroke:0.15px #212529;">3<span class="n1">1</span></div>
<div id="d1_4" class="ft" style="left:687.50px;top:579.11px;font-size:14.00px;color:#212529;font-weight:normal;-webkit-text-stroke:0.15px #212529;">46.68</div>
<div id="d1_5" class="ft" style="left:876.50px;top:579.11px;font-size:14.00px;color:#212529;font-weight:normal;-webkit-text-stroke:0.15px #212529;">60.98</div>
<div id="d1_6" class="ft" style="left:1069.50px;top:579.11px;font-size:14.00px;color:#212529;font-weight:normal;-webkit-text-stroke:0.15px #212529;">69.67</div>
<div id="d1_7" class="ft" style="left:1262.50px;top:579.11px;font-size:14.00px;color:#212529;font-weight:normal;-webkit-text-stroke:0.15px #212529;">7<span class="n1">1</span>.22</div>
<div id="d1_8" class="ft" style="left:1401.50px;top:579.11px;font-size:14.00px;color:#212529;font-weight:normal;-webkit-text-stroke:0.15px #212529;">7<span class="n1">1</span>.22</div>
<div id="d2_0" class="ft" style="left:23.50px;top:619.97px;font-size:14.00px;color:#212529;font-weight:normal;-webkit-text-stroke:0.15px #212529;">Bihar</div>
<div id="d2_1" class="ft" style="left:89.00px;top:619.97px;font-size:14.00px;color:#212529;font-weight:normal;-webkit-text-stroke:0.15px #212529;transform:scaleX(0.9399);transform-origin:0 0;"><span class="n1">1</span>43-TEGHRA</div>
<div id="d2_2" class="ft" style="left:296.50px;top:619.97px;font-size:14.00px;color:#212529;font-weight:normal;-webkit-text-stroke:0.15px #212529;"><span class="n1">1</span>5.<span class="n1">1</span>9</div>
<div id="d2_3" class="ft" style="left:491.50px;top:619.97px;font-size:14.00px;color:#212529;font-weight:normal;-webkit-text-stroke:0.15px #212529;">29.84</div>
<div id="d2_4" class="ft" style="left:687.50px;top:619.97px;font-size:14.00px;color:#212529;font-weight:normal;-webkit-text-stroke:0.15px #212529;">46.5</div>
<div id="d2_5" class="ft" style="left:876.50px;top:619.97px;font-size:14.00px;color:#212529;font-weight:normal;-webkit-text-stroke:0.15px #212529;">60.27</div>
<div id="d2_6" class="ft" style="left:1069.50px;top:619.97px;font-size:14.00px;color:#212529;font-weight:normal;-webkit-text-stroke:0.15px #212529;">69.75</div>
<div id="d2_7" class="ft" style="left:1262.50px;top:619.97px;font-size:14.00px;color:#212529;font-weight:normal;-webkit-text-stroke:0.15px #212529;">70.<span class="n1">1</span>4</div>
<div id="d2_8" class="ft" style="left:1401.50px;top:619.97px;font-size:14.00px;color:#212529;font-weight:normal;-webkit-text-stroke:0.15px #212529;">70.<span class="n1">1</span>4</div>
<div id="d3_0" class="ft" style="left:23.50px;top:660.83px;font-size:14.00px;color:#212529;font-weight:normal;-webkit-text-stroke:0.15px #212529;">Bihar</div>
<div id="d3_1" class="ft" style="left:89.00px;top:660.83px;font-size:14.00px;color:#212529;font-weight:normal;-webkit-text-stroke:0.15px #212529;transform:scaleX(0.9849);transform-origin:0 0;"><span class="n1">1</span>44-MATIHANI</div>
<div id="d3_2" class="ft" style="left:296.50px;top:660.83px;font-size:14.00px;color:#212529;font-weight:normal;-webkit-text-stroke:0.15px #212529;"><span class="n1">1</span>3.79</div>
<div id="d3_3" class="ft" style="left:491.50px;top:660.83px;font-size:14.00px;color:#212529;font-weight:normal;-webkit-text-stroke:0.15px #212529;">29.55</div>
<div id="d3_4" class="ft" style="left:687.50px;top:660.83px;font-size:14.00px;color:#212529;font-weight:normal;-webkit-text-stroke:0.15px #212529;">45.4<span class="n1">1</span></div>
<div id="d3_5" class="ft" style="left:876.50px;top:660.83px;font-size:14.00px;color:#212529;font-weight:normal;-webkit-text-stroke:0.15px #212529;">59.54</div>
<div id="d3_6" class="ft" style="left:1069.50px;top:660.83px;font-size:14.00px;color:#212529;font-weight:normal;-webkit-text-stroke:0.15px #212529;">68.6</div>
<div id="d3_7" class="ft" style="left:1262.50px;top:660.83px;font-size:14.00px;color:#212529;font-weight:normal;-webkit-text-stroke:0.15px #212529;">69.47</div>
<div id="d3_8" class="ft" style="left:1401.50px;top:660.83px;font-size:14.00px;color:#212529;font-weight:normal;-webkit-text-stroke:0.15px #212529;">69.47</div>
<div id="d4_0" class="ft" style="left:23.50px;top:701.69px;font-size:14.00px;color:#212529;font-weight:normal;-webkit-text-stroke:0.15px #212529;">Bihar</div>
<div id="d4_1" class="ft" style="left:89.00px;top:701.69px;font-size:14.00px;color:#212529;font-weight:normal;-webkit-text-stroke:0.15px #212529;transform:scaleX(0.9151);transform-origin:0 0;"><span class="n1">1</span>45-SAHEBPUR KAMAL</div>
<div id="d4_2" class="ft" style="left:296.50px;top:701.69px;font-size:14.00px;color:#212529;font-weight:normal;-webkit-text-stroke:0.15px #212529;"><span class="n1">1</span>4.6</div>
<div id="d4_3" class="ft" style="left:491.50px;top:701.69px;font-size:14.00px;color:#212529;font-weight:normal;-webkit-text-stroke:0.15px #212529;">27.94</div>
<div id="d4_4" class="ft" style="left:687.50px;top:701.69px;font-size:14.00px;color:#212529;font-weight:normal;-webkit-text-stroke:0.15px #212529;">4<span class="n1">1</span>.7</div>
<div id="d4_5" class="ft" style="left:876.50px;top:701.69px;font-size:14.00px;color:#212529;font-weight:normal;-webkit-text-stroke:0.15px #212529;">56.89</div>
<div id="d4_6" class="ft" style="left:1069.50px;top:701.69px;font-size:14.00px;color:#212529;font-weight:normal;-webkit-text-stroke:0.15px #212529;">60.66</div>
<div id="d4_7" class="ft" style="left:1262.50px;top:701.69px;font-size:14.00px;color:#212529;font-weight:normal;-webkit-text-stroke:0.15px #212529;">68.9</div>
<div id="d4_8" class="ft" style="left:1401.50px;top:701.69px;font-size:14.00px;color:#212529;font-weight:normal;-webkit-text-stroke:0.15px #212529;">68.9</div>
<div id="d5_0" class="ft" style="left:23.50px;top:742.55px;font-size:14.00px;color:#212529;font-weight:normal;-webkit-text-stroke:0.15px #212529;">Bihar</div>
<div id="d5_1" class="ft" style="left:89.00px;top:742.55px;font-size:14.00px;color:#212529;font-weight:normal;-webkit-text-stroke:0.15px #212529;transform:scaleX(0.9375);transform-origin:0 0;"><span class="n1">1</span>46-BEGUSARAI</div>
<div id="d5_2" class="ft" style="left:296.50px;top:742.55px;font-size:14.00px;color:#212529;font-weight:normal;-webkit-text-stroke:0.15px #212529;"><span class="n1">1</span>5.<span class="n1">1</span><span class="n1">1</span></div>
<div id="d5_3" class="ft" style="left:491.50px;top:742.55px;font-size:14.00px;color:#212529;font-weight:normal;-webkit-text-stroke:0.15px #212529;">30.<span class="n1">1</span>9</div>
<div id="d5_4" class="ft" style="left:687.50px;top:742.55px;font-size:14.00px;color:#212529;font-weight:normal;-webkit-text-stroke:0.15px #212529;">45.<span class="n1">1</span>4</div>
<div id="d5_5" class="ft" style="left:876.50px;top:742.55px;font-size:14.00px;color:#212529;font-weight:normal;-webkit-text-stroke:0.15px #212529;">59.37</div>
<div id="d5_6" class="ft" style="left:1069.50px;top:742.55px;font-size:14.00px;color:#212529;font-weight:normal;-webkit-text-stroke:0.15px #212529;">66.0<span class="n1">1</span></div>
<div id="d5_7" class="ft" style="left:1262.50px;top:742.55px;font-size:14.00px;color:#212529;font-weight:normal;-webkit-text-stroke:0.15px #212529;">66.44</div>
<div id="d5_8" class="ft" style="left:1401.50px;top:742.55px;font-size:14.00px;color:#212529;font-weight:normal;-webkit-text-stroke:0.15px #212529;">66.44</div>
<div id="d6_0" class="ft" style="left:23.50px;top:783.41px;font-size:14.00px;color:#212529;font-weight:normal;-webkit-text-stroke:0.15px #212529;">Bihar</div>
<div id="d6_1" class="ft" style="left:89.00px;top:783.41px;font-size:14.00px;color:#212529;font-weight:normal;-webkit-text-stroke:0.15px #212529;transform:scaleX(0.9430);transform-origin:0 0;"><span class="n1">1</span>47-BAKHRI</div>
<div id="d6_2" class="ft" style="left:296.50px;top:783.41px;font-size:14.00px;color:#212529;font-weight:normal;-webkit-text-stroke:0.15px #212529;"><span class="n1">1</span>3.<span class="n1">1</span></div>
<div id="d6_3" class="ft" style="left:491.50px;top:783.41px;font-size:14.00px;color:#212529;font-weight:normal;-webkit-text-stroke:0.15px #212529;">30.86</div>
<div id="d6_4" class="ft" style="left:687.50px;top:783.41px;font-size:14.00px;color:#212529;font-weight:normal;-webkit-text-stroke:0.15px #212529;">46.83</div>
<div id="d6_5" class="ft" style="left:876.50px;top:783.41px;font-size:14.00px;color:#212529;font-weight:normal;-webkit-text-stroke:0.15px #212529;">59.<span class="n1">1</span></div>
<div id="d6_6" class="ft" style="left:1069.50px;top:783.41px;font-size:14.00px;color:#212529;font-weight:normal;-webkit-text-stroke:0.15px #212529;">66.88</div>
<div id="d6_7" class="ft" style="left:1262.50px;top:783.41px;font-size:14.00px;color:#212529;font-weight:normal;-webkit-text-stroke:0.15px #212529;">68.88</div>
<div id="d6_8" class="ft" style="left:1401.50px;top:783.41px;font-size:14.00px;color:#212529;font-weight:normal;-webkit-text-stroke:0.15px #212529;">68.88</div>
</body></html>
